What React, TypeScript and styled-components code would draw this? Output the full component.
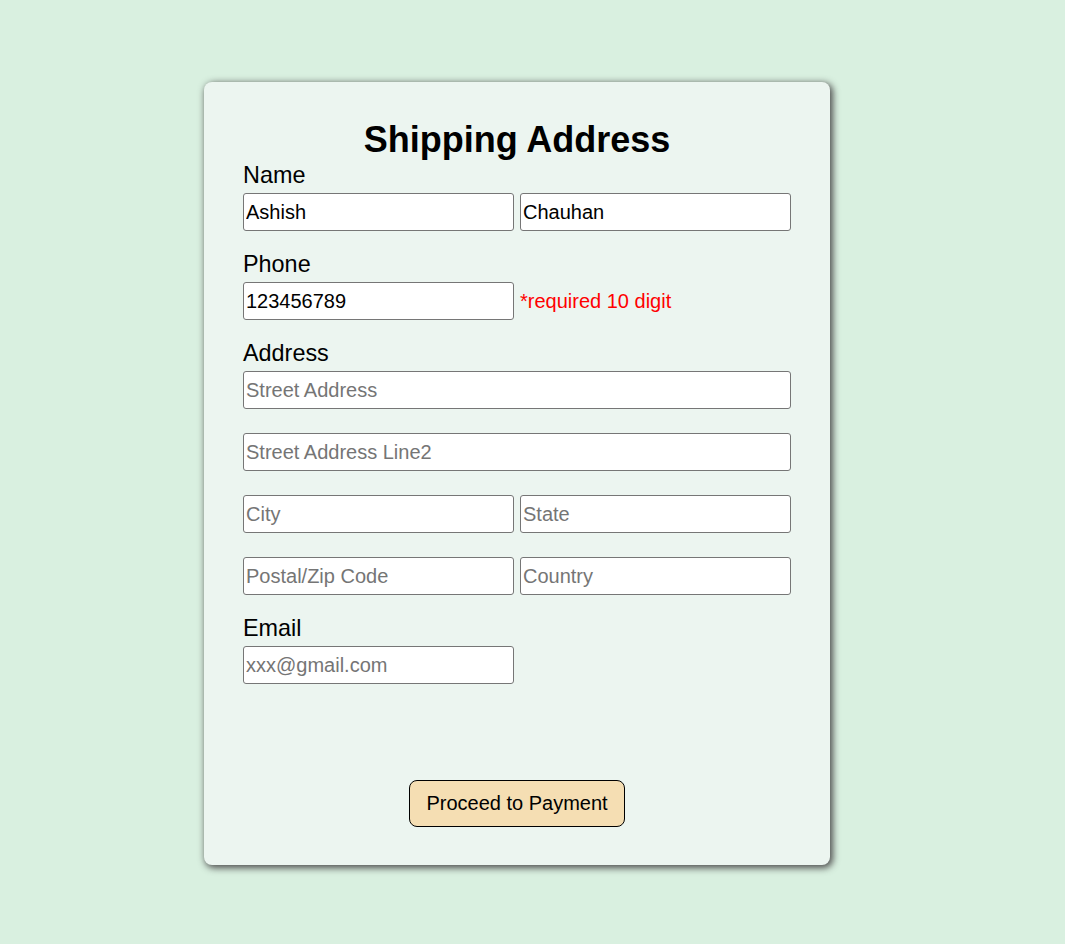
import styled, { createGlobalStyle } from 'styled-components';

const GlobalStyle = createGlobalStyle`
  html, body {
    margin: 0;
    padding: 0;
    background-color: #d9f0e0;
    font-family: 'Liberation Sans', Arial, sans-serif;
  }
`;

const Page = styled.div`
  min-height: 944px;
  display: flex;
  justify-content: center;
  align-items: flex-start;
  padding: 82px 31px 0 0;
  box-sizing: border-box;
`;

const Card = styled.form`
  width: 626px;
  box-sizing: border-box;
  background-color: #ecf5f0;
  border-radius: 8px;
  box-shadow: 2px 2px 7px 1px #4f4f4f;
  padding: 37px 39px 38px;
  display: flex;
  flex-direction: column;
`;

const Title = styled.h2`
  margin: 0 0 2px;
  font-size: 36px;
  font-weight: bold;
  text-align: center;
  color: #000;
`;

const Section = styled.div<{ $first?: boolean }>`
  display: flex;
  flex-direction: column;
  margin-top: ${(p) => (p.$first ? '0' : '21px')};
`;

const Label = styled.label`
  font-size: 23.4px;
  line-height: 25px;
  color: #000;
  margin-bottom: 5px;
`;

const Rows = styled.div`
  display: flex;
  flex-direction: column;
  gap: 24px;
`;

const Row = styled.div`
  display: grid;
  grid-template-columns: 1fr 1fr;
  gap: 6px;
  align-items: center;
`;

const Input = styled.input<{ $wide?: boolean }>`
  grid-column: ${(p) => (p.$wide ? '1 / 3' : 'auto')};
  height: 38px;
  box-sizing: border-box;
  border: 1px solid #767676;
  border-radius: 3px;
  background: #fff;
  padding: 1px 2px;
  font-family: 'Liberation Sans', Arial, sans-serif;
  font-size: 20px;
  color: #000;
  &::placeholder {
    color: #757575;
  }
`;

const Hint = styled.span`
  font-size: 20px;
  color: #ff0000;
`;

const ButtonRow = styled.div`
  display: flex;
  justify-content: center;
  margin-top: 96px;
`;

const PayButton = styled.button`
  font-family: 'Liberation Sans', Arial, sans-serif;
  font-size: 20px;
  color: #000;
  background-color: #f5deb3;
  border: 1px solid #000;
  border-radius: 8px;
  padding: 11px 16.5px;
  cursor: pointer;
`;

export default function App() {
  return (
    <>
      <GlobalStyle />
      <Page>
        <Card onSubmit={(e) => e.preventDefault()}>
          <Title>Shipping Address</Title>
          <Section $first>
            <Label>Name</Label>
            <Row>
              <Input defaultValue="Ashish" />
              <Input defaultValue="Chauhan" />
            </Row>
          </Section>
          <Section>
            <Label>Phone</Label>
            <Row>
              <Input defaultValue="123456789" />
              <Hint>*required 10 digit</Hint>
            </Row>
          </Section>
          <Section>
            <Label>Address</Label>
            <Rows>
              <Row>
                <Input $wide placeholder="Street Address" />
              </Row>
              <Row>
                <Input $wide placeholder="Street Address Line2" />
              </Row>
              <Row>
                <Input placeholder="City" />
                <Input placeholder="State" />
              </Row>
              <Row>
                <Input placeholder="Postal/Zip Code" />
                <Input placeholder="Country" />
              </Row>
            </Rows>
          </Section>
          <Section>
            <Label>Email</Label>
            <Row>
              <Input placeholder="xxx@gmail.com" />
            </Row>
          </Section>
          <ButtonRow>
            <PayButton type="submit">Proceed to Payment</PayButton>
          </ButtonRow>
        </Card>
      </Page>
    </>
  );
}
